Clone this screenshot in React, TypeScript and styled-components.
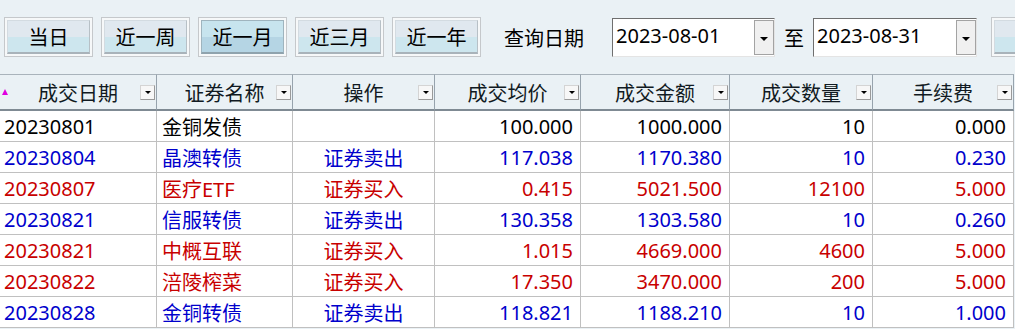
import React from 'react';
import styled, { createGlobalStyle } from 'styled-components';

const GlobalStyle = createGlobalStyle`
  html, body {
    margin: 0;
    padding: 0;
    background: #eaf1f5;
    overflow: hidden;
  }
  body {
    font-family: "Noto Sans", "Noto Sans CJK SC", sans-serif;
  }
`;

const Page = styled.div`
  width: 1015px;
  height: 329px;
  overflow: hidden;
  background: #eaf1f5;
`;

const Toolbar = styled.div`
  display: flex;
  align-items: center;
  height: 40px;
  padding: 17px 0 17px 4px;
  white-space: nowrap;
`;

const RangeButton = styled.div<{ $ml?: number }>`
  flex: none;
  width: 89px;
  height: 40px;
  margin-right: 8px;
  margin-left: ${(p) => p.$ml || 0}px;
  padding: 2px;
  box-sizing: border-box;
  border: 1px solid #c5c8cb;
  background: #f6f8f9;
  cursor: pointer;
`;

const ButtonFace = styled.div<{ $active?: boolean }>`
  height: 100%;
  box-sizing: border-box;
  display: flex;
  align-items: center;
  justify-content: center;
  font-size: 20px;
  color: #000;
  border: 1px solid ${(p) => (p.$active ? '#9fb4be' : '#d3dbe1')};
  border-bottom: 2px solid ${(p) => (p.$active ? '#8fa3ad' : '#a9b3ba')};
  border-right-color: ${(p) => (p.$active ? '#9fb4be' : '#b7c0c6')};
  background: ${(p) =>
    p.$active
      ? 'linear-gradient(#c7e4ee 0%, #c7e4ee 52%, #b5d5e4 52%, #b5d5e4 100%)'
      : 'linear-gradient(#e0e8ef 0%, #e0e8ef 52%, #cde6ee 52%, #cde6ee 100%)'};
`;

const Label = styled.div<{ $ml: number; $mr: number }>`
  flex: none;
  font-size: 20px;
  color: #000;
  margin-left: ${(p) => p.$ml}px;
  margin-right: ${(p) => p.$mr}px;
`;

const DateBox = styled.div<{ $w: number }>`
  flex: none;
  width: ${(p) => p.$w}px;
  height: 39px;
  box-sizing: border-box;
  display: flex;
  background: #fff;
  border-top: 1px solid #6f6f6f;
  border-left: 1px solid #6f6f6f;
  border-right: 1px solid #e4e4e4;
  border-bottom: 1px solid #e4e4e4;
`;

const DateText = styled.div`
  flex: 1;
  padding: 0 0 3px 3px;
  display: flex;
  align-items: center;
  font-size: 20px;
  color: #000;
`;

const DropButton = styled.div`
  flex: none;
  width: 20px;
  margin: 1px 0;
  box-sizing: border-box;
  background: #f0f0f0;
  border: 1px solid #a3a3a3;
  display: flex;
  align-items: center;
  justify-content: center;
  padding-top: 3px;
`;

const DownArrow = styled.span<{ $size?: number }>`
  width: 0;
  height: 0;
  border-left: ${(p) => p.$size || 4}px solid transparent;
  border-right: ${(p) => p.$size || 4}px solid transparent;
  border-top: ${(p) => p.$size || 4}px solid #000;
`;

const Grid = styled.div`
  display: grid;
  grid-template-columns: 157px 136px 142px 146px 149px 143px 141px;
  width: 1014px;
`;

const HeadCell = styled.div`
  height: 37px;
  box-sizing: border-box;
  display: grid;
  grid-template-columns: 17px 1fr 17px;
  align-items: center;
  background: #eaf1f5;
  border-top: 1px solid #a9b3bb;
  border-right: 1px solid #97a3ad;
  border-bottom: 2px solid #7f8a93;
  font-size: 20px;
  color: #111a22;
`;

const HeadText = styled.span`
  grid-column: 2;
  text-align: center;
  white-space: nowrap;
`;

const SortMark = styled.span`
  grid-column: 1;
  justify-self: start;
  margin-left: 2px;
  width: 0;
  height: 0;
  border-left: 3px solid transparent;
  border-right: 3px solid transparent;
  border-bottom: 6px solid #e000e0;
`;

const FilterButton = styled.span`
  grid-column: 3;
  justify-self: end;
  margin-right: 1px;
  width: 15px;
  height: 15px;
  box-sizing: border-box;
  background: #f7f7f7;
  border: 1px solid #9a9a9a;
  border-top-color: #d4d4d4;
  border-left-color: #d4d4d4;
  display: flex;
  align-items: center;
  justify-content: center;
`;

const colors = {
  black: '#000000',
  blue: '#0000cc',
  red: '#c80000',
};

type Tone = keyof typeof colors;

const Cell = styled.div<{ $align: 'left' | 'center' | 'right'; $tone: Tone; $pl?: number }>`
  height: 31px;
  box-sizing: border-box;
  display: flex;
  align-items: center;
  justify-content: ${(p) =>
    p.$align === 'left' ? 'flex-start' : p.$align === 'right' ? 'flex-end' : 'center'};
  padding: 0 7px 0 ${(p) => (p.$pl !== undefined ? p.$pl : 7)}px;
  background: #fff;
  border-right: 1px solid #c0c0c0;
  border-bottom: 1px solid #c0c0c0;
  font-size: 20px;
  color: ${(p) => colors[p.$tone]};
  white-space: nowrap;
  overflow: hidden;
`;

const headers = ['成交日期', '证券名称', '操作', '成交均价', '成交金额', '成交数量', '手续费'];

const rows: [string, string, string, string, string, string, string, Tone][] = [
  ['20230801', '金铜发债', '', '100.000', '1000.000', '10', '0.000', 'black'],
  ['20230804', '晶澳转债', '证券卖出', '117.038', '1170.380', '10', '0.230', 'blue'],
  ['20230807', '医疗ETF', '证券买入', '0.415', '5021.500', '12100', '5.000', 'red'],
  ['20230821', '信服转债', '证券卖出', '130.358', '1303.580', '10', '0.260', 'blue'],
  ['20230821', '中概互联', '证券买入', '1.015', '4669.000', '4600', '5.000', 'red'],
  ['20230822', '涪陵榨菜', '证券买入', '17.350', '3470.000', '200', '5.000', 'red'],
  ['20230828', '金铜转债', '证券卖出', '118.821', '1188.210', '10', '1.000', 'blue'],
];

const ranges = ['当日', '近一周', '近一月', '近三月', '近一年'];

function App() {
  return (
    <Page>
      <GlobalStyle />
      <Toolbar>
        {ranges.map((r) => (
          <RangeButton key={r}>
            <ButtonFace $active={r === '近一月'}>{r}</ButtonFace>
          </RangeButton>
        ))}
        <Label $ml={15} $mr={28}>查询日期</Label>
        <DateBox $w={163}>
          <DateText>2023-08-01</DateText>
          <DropButton>
            <DownArrow />
          </DropButton>
        </DateBox>
        <Label $ml={9} $mr={9}>至</Label>
        <DateBox $w={164}>
          <DateText>2023-08-31</DateText>
          <DropButton>
            <DownArrow />
          </DropButton>
        </DateBox>
        {/* 查询 button, only its left edge fits in the window */}
        <RangeButton $ml={14} aria-label="查询">
          <ButtonFace />
        </RangeButton>
      </Toolbar>

      <Grid>
        {headers.map((h, i) => (
          <HeadCell key={h}>
            {i === 0 && <SortMark />}
            <HeadText>{h}</HeadText>
            <FilterButton>
              <DownArrow $size={3} />
            </FilterButton>
          </HeadCell>
        ))}
        {rows.map((r, ri) => (
          <React.Fragment key={ri}>
            <Cell $align="left" $tone={r[7]} $pl={4}>{r[0]}</Cell>
            <Cell $align="left" $tone={r[7]} $pl={5}>{r[1]}</Cell>
            <Cell $align="center" $tone={r[7]}>{r[2]}</Cell>
            <Cell $align="right" $tone={r[7]}>{r[3]}</Cell>
            <Cell $align="right" $tone={r[7]}>{r[4]}</Cell>
            <Cell $align="right" $tone={r[7]}>{r[5]}</Cell>
            <Cell $align="right" $tone={r[7]}>{r[6]}</Cell>
          </React.Fragment>
        ))}
      </Grid>
    </Page>
  );
}

export default App;
